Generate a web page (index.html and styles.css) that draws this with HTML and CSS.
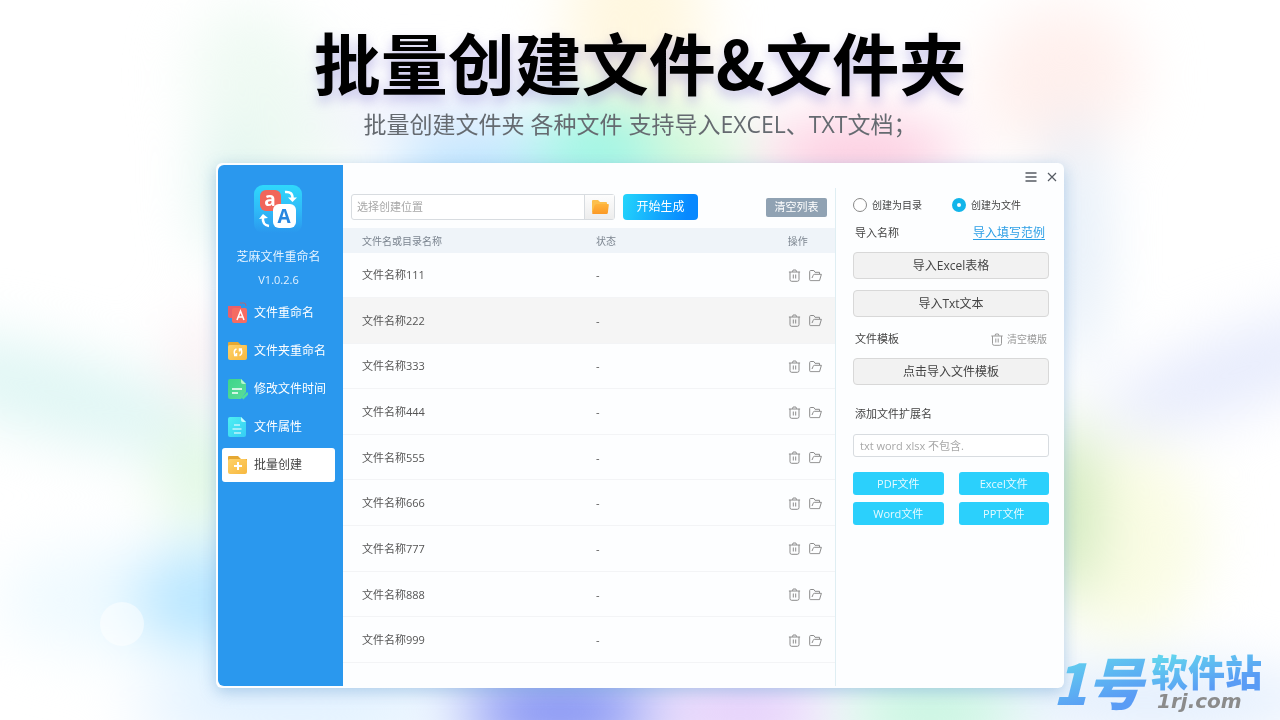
FILE: index.html
```html
<!DOCTYPE html>
<html lang="zh-CN">
<head>
<meta charset="utf-8">
<meta name="viewport" content="width=device-width, initial-scale=1">
<title>批量创建文件&amp;文件夹</title>
<link rel="stylesheet" href="styles.css">
</head>
<body>
<svg class="defs" aria-hidden="true">
  <defs>
    <linearGradient id="logoBg" x1="0" y1="0" x2="0" y2="1"><stop offset="0" stop-color="#2fd8fb"/><stop offset=".5" stop-color="#2fbcf8"/><stop offset="1" stop-color="#2a98ee"/></linearGradient>
    <linearGradient id="gold" x1="0" y1="0" x2="1" y2="1"><stop offset="0" stop-color="#ffd26a"/><stop offset="1" stop-color="#f7b83f"/></linearGradient>
    <linearGradient id="orange" x1="0" y1="0" x2="0" y2="1"><stop offset="0" stop-color="#ffb43c"/><stop offset="1" stop-color="#fb9926"/></linearGradient>
    <linearGradient id="green" x1="0" y1="0" x2="1" y2="1"><stop offset="0" stop-color="#3ed688"/><stop offset="1" stop-color="#5cdc9c"/></linearGradient>
    <linearGradient id="cyan" x1="0" y1="0" x2="1" y2="1"><stop offset="0" stop-color="#4ff0f2"/><stop offset="1" stop-color="#35cdf4"/></linearGradient>
    <symbol id="trash" viewBox="0 0 12 13"><g fill="none" stroke="currentColor" stroke-width="1"><path d="M.3 3h11.4M4 2.8L4.6 1h2.8L8 2.8M1.5 3v7.6q0 1.700 1.700 1.700h5.600q1.700 0 1.700-1.700V3M4.800 5.500v4M7.200 5.500v4"/></g></symbol>
    <symbol id="open" viewBox="0 0 13 12"><g fill="none" stroke="currentColor" stroke-width="1" stroke-linejoin="round"><path d="M10.500 4.500V2.800H6L4.800 1H1.600q-.9 0-.9 1v8.200q0 1 1 1h8.800L12.400 4.800H5.500q-1.100 0-1.400 1.200L3 8.500"/></g></symbol>
  </defs>
</svg>

<main class="page">
  <svg class="backdrop" viewBox="0 0 1280 720" preserveAspectRatio="none" aria-hidden="true">
    <defs><filter id="soft" x="-20%" y="-20%" width="140%" height="140%" color-interpolation-filters="sRGB"><feGaussianBlur stdDeviation="30"/></filter></defs>
    <g filter="url(#soft)">
      <ellipse cx="270" cy="110" rx="70" ry="110" fill="#effaf3" transform="rotate(-25 270 110)"/>
      <ellipse cx="230" cy="190" rx="30" ry="70" fill="#def4ee"/>
      <ellipse cx="635" cy="30" rx="70" ry="110" fill="#fff7e0"/>
      <ellipse cx="480" cy="165" rx="90" ry="35" fill="#b8e4ff"/>
      <ellipse cx="420" cy="110" rx="110" ry="25" fill="#f0f0fc"/>
      <ellipse cx="600" cy="150" rx="70" ry="45" fill="#98f5e2"/>
      <ellipse cx="700" cy="155" rx="45" ry="40" fill="#cdf7d4"/>
      <ellipse cx="860" cy="155" rx="100" ry="36" fill="#fcc8dd"/>
      <ellipse cx="1060" cy="80" rx="80" ry="75" fill="#fff0ed" transform="rotate(-30 1060 80)"/>
      <ellipse cx="60" cy="395" rx="170" ry="42" fill="#dff6f4" transform="rotate(15 60 395)"/>
      <ellipse cx="205" cy="360" rx="30" ry="50" fill="#f9eef1"/>
      <ellipse cx="205" cy="480" rx="45" ry="50" fill="#e0f8e2"/>
      <ellipse cx="110" cy="600" rx="110" ry="55" fill="#effaff"/>
      <ellipse cx="215" cy="600" rx="80" ry="55" fill="#b8e6ff"/>
      <ellipse cx="1075" cy="240" rx="22" ry="130" fill="#dbe8f6"/>
      <ellipse cx="1240" cy="370" rx="150" ry="36" fill="#e5eafc" transform="rotate(-20 1240 370)"/>
      <ellipse cx="1125" cy="540" rx="80" ry="100" fill="#fafce4"/>
      <ellipse cx="1060" cy="510" rx="36" ry="90" fill="#cde8bc"/>
      <ellipse cx="1150" cy="700" rx="180" ry="32" fill="#dfecfd"/>
      <ellipse cx="300" cy="710" rx="170" ry="25" fill="#d4ebff"/>
      <ellipse cx="560" cy="712" rx="100" ry="36" fill="#7484f2"/>
      <ellipse cx="740" cy="712" rx="90" ry="35" fill="#e0c8fa"/>
      <ellipse cx="930" cy="712" rx="90" ry="35" fill="#bff3dc"/>
    </g>
    <circle cx="122" cy="624" r="22" fill="#fff" opacity=".5"/>
  </svg>

  <h1 class="title">批量创建文件&amp;文件夹</h1>
  <p class="subtitle">批量创建文件夹 各种文件 支持导入EXCEL、TXT文档；</p>

  <section class="window">
    <aside class="sidebar">
      <svg class="logo" viewBox="0 0 48 48" aria-hidden="true">
        <rect width="48" height="48" rx="9" fill="url(#logoBg)"/>
        <rect x="6" y="5" width="21" height="21" rx="6" fill="#f1665a"/>
        <text x="16" y="21" class="logo-letter" fill="#fff">a</text>
        <rect x="19" y="19" width="23" height="24" rx="6" fill="#fff"/>
        <text x="30" y="38" class="logo-letter" fill="#2786e0">A</text>
        <path d="M31 7q8-1 7.500 7" fill="none" stroke="#fff" stroke-width="2.500"/><path d="M34 12.500h9L38.500 17z" fill="#fff"/>
        <path d="M15 41q-7-1-6-9" fill="none" stroke="#fff" stroke-width="2.500"/><path d="M5 34l4-5 5 4z" fill="#fff"/>
      </svg>
      <p class="app-name">芝麻文件重命名</p>
      <p class="version">V1.0.2.6</p>
      <nav class="menu">
        <a class="menu-item" href="#"><svg viewBox="0 0 20 22" aria-hidden="true"><path d="M0 4h13v12H2q-2 0-2-2z" fill="#e8606a"/><rect x="4" y="6" width="15" height="15" rx="2" fill="#f56c62"/><path d="M12 1h4q2 0 2 3" fill="none" stroke="#b8666f" stroke-width="1"/><path d="M9 18l3.500-9L16 18M10.200 15h4.600" fill="none" stroke="#fff" stroke-width="1.500"/></svg>文件重命名</a>
        <a class="menu-item" href="#"><svg viewBox="0 0 20 22" aria-hidden="true"><path d="M0 3q0-1 1-1h9l3 3h6v8H0z" fill="#e5a833"/><rect x="0" y="5" width="19" height="15" rx="2" fill="url(#gold)"/><path d="M8.500 9Q5.500 10 6.500 14l2 1.500M6 15.500h2.500V13M11.500 15.500q3-1 2-5l-2-1.500M14 9h-2.500v2.500" fill="none" stroke="#fff" stroke-width="1.500"/></svg>文件夹重命名</a>
        <a class="menu-item" href="#"><svg viewBox="0 0 20 22" aria-hidden="true"><path d="M0 3q0-2 2-2h11l5 5v8l-5 7H2q-2 0-2-2z" fill="url(#green)"/><path d="M13 1v3q0 2 2 2h3z" fill="#b7f6d0"/><path d="M4 11h10M4 15h6" stroke="#fff" stroke-width="1.500"/><path d="M14.500 20.500L20 15" stroke="#50e09a" stroke-width="2.500"/></svg>修改文件时间</a>
        <a class="menu-item" href="#"><svg viewBox="0 0 20 22" aria-hidden="true"><path d="M0 3q0-2 2-2h11l5 5v13q0 2-2 2H2q-2 0-2-2z" fill="url(#cyan)"/><path d="M13 1v3q0 2 2 2h3z" fill="#c4fbff"/><path d="M6 9h6M4.500 13h9M6 17h7" stroke="#fff" stroke-width="1.200"/></svg>文件属性</a>
        <a class="menu-item is-active" href="#" aria-current="page"><svg viewBox="0 0 20 22" aria-hidden="true"><path d="M0 3q0-1 1-1h9l3 3h6v8H0z" fill="#e5a833"/><rect x="0" y="5" width="19" height="15" rx="2" fill="url(#gold)"/><path d="M6 12h8M10 8v8" stroke="#fff" stroke-width="2"/></svg>批量创建</a>
      </nav>
    </aside>

    <div class="content">
      <header class="window-bar">
        <button class="bar-button" type="button" aria-label="菜单"><svg viewBox="0 0 12 12"><path d="M.5 2h11M.5 6h11M.5 10h11" stroke="currentColor" stroke-width="1.300"/></svg></button>
        <button class="bar-button" type="button" aria-label="关闭"><svg viewBox="0 0 12 12"><path d="M2 2l8 8M10 2l-8 8" stroke="currentColor" stroke-width="1.200"/></svg></button>
      </header>

      <div class="columns">
        <div class="files">
          <div class="toolbar">
            <div class="path-field">
              <input class="path-input" type="text" placeholder="选择创建位置" aria-label="选择创建位置">
              <button class="browse" type="button" aria-label="浏览"><svg viewBox="0 0 18 16"><path d="M1 2q0-1 1-1h5l2 2h6q1 0 1 1v9H1z" fill="#fcbf4c"/><path d="M3.500 6.500Q4 5 5.500 5H17q1 0 .8 1l-1 8q-.2 1-1.200 1H2q-1 0-.9-1z" fill="url(#orange)"/></svg></button>
            </div>
            <button class="start" type="button">开始生成</button>
            <button class="clear" type="button">清空列表</button>
          </div>
          <table class="table">
            <colgroup><col class="col-name"><col class="col-state"><col class="col-actions"></colgroup>
            <thead><tr><th>文件名或目录名称</th><th>状态</th><th>操作</th></tr></thead>
            <tbody id="rows"></tbody>
          </table>
        </div>

        <form class="options">
          <div class="radios">
            <label class="radio"><input type="radio" name="kind">创建为目录</label>
            <label class="radio"><input type="radio" name="kind" checked>创建为文件</label>
          </div>
          <div class="option-head"><span>导入名称</span><a class="sample" href="#">导入填写范例</a></div>
          <button class="wide" type="button">导入Excel表格</button>
          <button class="wide" type="button">导入Txt文本</button>
          <div class="option-head template-head"><span>文件模板</span><button class="clear-template" type="button"><svg viewBox="0 0 12 13"><use href="#trash"/></svg>清空模版</button></div>
          <button class="wide" type="button">点击导入文件模板</button>
          <label class="ext-label" for="ext">添加文件扩展名</label>
          <input class="ext-input" id="ext" type="text" placeholder="txt word xlsx 不包含.">
          <div class="types">
            <button class="type" type="button">PDF文件</button>
            <button class="type" type="button">Excel文件</button>
            <button class="type" type="button">Word文件</button>
            <button class="type" type="button">PPT文件</button>
          </div>
        </form>
      </div>
    </div>
  </section>

  <div class="site-mark">
    <span class="mark-big">1号</span>
    <span class="mark-side"><span class="mark-name">软件站</span><span class="mark-url">1rj.com</span></span>
  </div>
</main>
<script src="rows.js"></script>
</body>
</html>
```

FILE: rows.js
```js
const body = document.getElementById("rows");
for (let i = 1; i <= 9; i++) {
  const row = document.createElement("tr");
  if (i === 2) row.className = "is-hover";
  row.innerHTML = `<td>文件名称${String(i).repeat(3)}</td><td>-</td><td><span class="actions">
    <button type="button" aria-label="删除"><svg viewBox="0 0 12 13"><use href="#trash"/></svg></button>
    <button type="button" aria-label="打开"><svg viewBox="0 0 13 12"><use href="#open"/></svg></button></span></td>`;
  body.append(row);
}
```

FILE: styles.css
```css
* { box-sizing: border-box; }

body {
  margin: 0;
  font: 12px/18px "Open Sans", "Noto Sans CJK SC", sans-serif;
  color: #444;
}

button, input { font: inherit; color: inherit; margin: 0; }
button { padding: 0; border: 0; background: none; cursor: pointer; }
p, h1 { margin: 0; }
svg { display: block; }
.defs { position: absolute; width: 0; height: 0; }

.page {
  position: relative;
  z-index: 0;
  min-height: 100vh;
  padding: 16px 0 32px;
  display: flex;
  flex-direction: column;
  align-items: center;
  overflow: hidden;
  background: #fff;
}
.backdrop { position: absolute; inset: 0; z-index: -1; width: 100%; height: 100%; }

.title {
  font: 700 67px/90px "Noto Sans CJK SC", sans-serif;
  color: #000;
  text-shadow: 0 6px 12px #7a70d066;
}

.subtitle {
  font: 400 23px/36px "Open Sans", "Noto Sans CJK SC", sans-serif;
  color: #656a70;
}

.window {
  width: 66.25%;
  min-width: 720px;
  margin-top: 21px;
  padding: 2px;
  display: grid;
  grid-template-columns: 125px 1fr;
  border-radius: 6px;
  background: #fdfeff;
  box-shadow: 0 4px 16px #4a8cc866;
}

.sidebar {
  padding: 20px 4px;
  border-radius: 6px 0 0 6px;
  background: #2a98ee;
  color: #fff;
  text-align: center;
}
.logo { width: 48px; height: 48px; margin: 0 0 0 32px; }
.logo-letter { font: 700 19px "Open Sans", sans-serif; text-anchor: middle; }
.app-name, .version { padding-right: 4px; color: #e2f2ff; }
.app-name { margin-top: 15px; }
.version { margin-top: 5px; font-size: 11px; }
.menu { display: grid; gap: 4px; margin-top: 7px; }
.menu-item {
  display: flex;
  align-items: center;
  gap: 6px;
  height: 34px;
  margin-right: 4px;
  padding-left: 6px;
  border-radius: 3px;
  color: #fff;
  text-decoration: none;
}
.menu-item svg { width: 20px; height: 22px; }
.menu-item.is-active { background: #fff; color: #444; }

.content { display: flex; flex-direction: column; min-width: 0; }
.window-bar {
  display: flex;
  justify-content: flex-end;
  gap: 9px;
  padding: 6px 4px 5px;
  color: #555b63;
}
.bar-button svg { width: 12px; height: 12px; }

.columns { display: grid; grid-template-columns: 1fr 226px; flex: 1; }
.files { border-right: 1px solid #dfeef3; min-width: 0; padding-bottom: 23px; }
.toolbar { display: flex; align-items: center; gap: 8px; padding: 6px 8px 8px; }
.path-field {
  display: flex;
  flex: 0 1 264px;
  min-width: 0;
  height: 26px;
  border: 1px solid #d8dce0;
  border-radius: 3px;
  background: #fff;
}
.path-input { flex: 1; min-width: 0; padding: 0 5px; border: 0; background: none; font-size: 11px; }
::placeholder { color: #a8a8a8; opacity: 1; }
.browse {
  display: grid;
  place-items: center;
  width: 30px;
  border-left: 1px solid #d8dce0;
  background: linear-gradient(#fdfdfd, #ededed);
}
.browse svg { width: 18px; height: 16px; }
.start {
  width: 75px;
  height: 26px;
  border-radius: 4px;
  background: linear-gradient(105deg, #24d5fb, #0788ff 85%);
  color: #fff;
}
.clear {
  width: 61px;
  height: 19px;
  margin-left: auto;
  border-radius: 2px;
  background: #90a2b3;
  color: #fff;
  font-size: 11px;
  line-height: 18px;
}

.table { width: 100%; height: 435px; border-collapse: collapse; table-layout: fixed; font-size: 11px; color: #555; }
.col-name { width: 51%; }
.col-state { width: 39%; }
.table th { height: 25px; padding: 0 0 0 19px; background: #eff4f9; color: #7c8590; font-size: 10px; font-weight: 400; text-align: left; }
.table td { padding: 1px 0 0 19px; border-bottom: 1px solid #f3f4f6; }
.table :is(th, td):nth-child(n+2) { padding-left: 2px; }
.is-hover { background: #f5f5f5; }
.actions { display: flex; align-items: center; gap: 8px; color: #8b8b8b; }
.actions svg { width: 13px; height: 13px; }

.options { padding: 8px 13px 20px 17px; font-size: 11px; }
.radios { display: flex; gap: 30px; font-size: 10px; }
.radio { display: flex; align-items: center; gap: 5px; }
.radio input {
  appearance: none;
  width: 14px;
  height: 14px;
  border: 1px solid #888;
  border-radius: 50%;
  background: #fff;
}
.radio input:checked { border: 5px solid #12b5ea; }
.option-head { display: flex; align-items: center; justify-content: space-between; padding: 0 4px 0 2px; margin: 10px 0; }
.sample { color: #2c9fe6; font-size: 12px; text-underline-offset: 2px; }
.wide {
  display: block;
  width: 100%;
  height: 27px;
  border: 1px solid #d8d8d8;
  border-radius: 4px;
  background: #f2f2f2;
  font-size: 12px;
}
.wide + .wide { margin-top: 11px; }
.template-head { margin: 13px 0 10px; padding-right: 2px; }
.clear-template { display: flex; align-items: center; gap: 4px; color: #999; font-size: 10px; }
.clear-template svg { width: 12px; height: 13px; }
.ext-label { display: block; margin: 20px 0 11px 2px; }
.ext-input { display: block; width: 100%; height: 23px; padding: 0 6px; border: 1px solid #d8dce0; border-radius: 3px; background: #fff; }
.types { display: grid; grid-template-columns: 1fr 1fr; gap: 7px 15px; margin-top: 15px; }
.type { height: 23px; border-radius: 3px; background: #2bd0fc; color: #e6faff; }

.site-mark {
  position: absolute;
  right: 18px;
  bottom: 5px;
  display: flex;
  align-items: center;
  gap: 2px;
  font-family: "Noto Sans CJK SC", sans-serif;
  font-weight: 900;
}
.mark-big, .mark-name {
  background: linear-gradient(165deg, #62d3ee 15%, #5a9cf5 75%);
  background-clip: text;
  color: transparent;
}
.mark-big { padding: 0 6px 0 4px; font-size: 56px; font-style: italic; line-height: 68px; }
.mark-side { display: flex; flex-direction: column; }
.mark-name { font-size: 37px; line-height: 40px; }
.mark-url { padding-left: 6px; font: italic 700 20px/20px "DejaVu Sans", sans-serif; color: #8b8b8b; }
```
